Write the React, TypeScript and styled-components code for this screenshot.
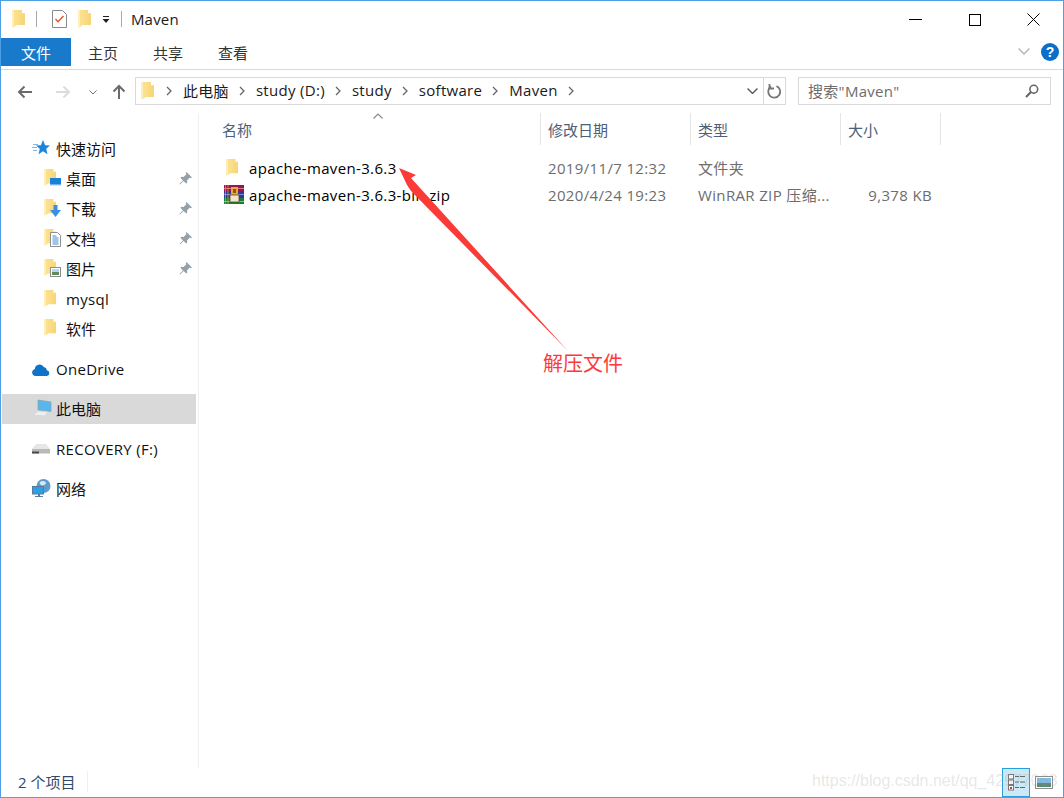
import { FC, ReactNode } from "react";
import styled, { createGlobalStyle } from "styled-components";

const UI_FONT = `"Open Sans", "Noto Sans CJK SC", sans-serif`;

const GlobalStyle = createGlobalStyle`
  html, body {
    margin: 0;
    padding: 0;
    background: #fff;
  }
  * {
    box-sizing: border-box;
  }
`;

const FolderIcon: FC<{ size?: number }> = ({ size = 18 }) => (
  <svg width={size * 0.72} height={size} viewBox="0 0 13 18">
    <defs>
      <linearGradient id="folderBody" x1="0" y1="0" x2="1" y2="0">
        <stop offset="0" stopColor="#fde594" />
        <stop offset="1" stopColor="#f7d377" />
      </linearGradient>
    </defs>
    <path d="M0 0H10V3H13V15H5L1 17.500 0 17z" fill="url(#folderBody)" />
    <path d="M0 0H2V17L1 17.500 0 17z" fill="#fdeebb" />
    <path d="M5 15V3h8v.800H6V15z" fill="#fbe08e" />
  </svg>
);

const NavFolder: FC<{ badge?: ReactNode }> = ({ badge }) => (
  <FolderWrap>
    <FolderIcon size={17} />
    {badge}
  </FolderWrap>
);

const DesktopBadge = () => (
  <BadgeSvg width="11" height="9" viewBox="0 0 11 9">
    <rect width="11" height="8" fill="#1a7fd8" />
    <rect y="6.500" width="11" height="1.500" fill="#cfe4f7" />
  </BadgeSvg>
);

const DownloadBadge = () => (
  <BadgeSvg width="11" height="12" viewBox="0 0 11 12">
    <path d="M3.500 0h4v5H11L5.500 12 0 5h3.500z" fill="#3c8ee0" />
  </BadgeSvg>
);

const DocumentBadge = () => (
  <BadgeSvg width="11" height="15" viewBox="0 0 11 15">
    <path d="M.5.500h7l3 3v11H.5z" fill="#fff" stroke="#8e8e8e" />
    <path d="M2.500 4h4M2.500 6h6M2.500 8h6M2.500 10h6M2.500 12h6" stroke="#3f8bd0" />
  </BadgeSvg>
);

const PictureBadge = () => (
  <BadgeSvg width="11" height="10" viewBox="0 0 11 10">
    <rect x=".5" y=".5" width="10" height="9" fill="#fff" stroke="#8e8e8e" />
    <rect x="2" y="2" width="7" height="3" fill="#b7d7ee" />
    <rect x="2" y="5" width="7" height="3" fill="#5f8a5a" />
  </BadgeSvg>
);

const PinIcon = () => (
  <svg width="13" height="13" viewBox="0 0 13 13">
    <path d="M7.500 0L13 5.500l-1.200.8-1-.7L8 8.400l.3 2.200-1 1L4.600 9 1 12.600.4 12 4 8.400 1.400 5.700l1-1 2.200.3 2.800-2.800-.7-1z" fill="#94a0aa" />
  </svg>
);

const StarIcon = () => (
  <svg width="18" height="16" viewBox="0 0 18 16">
    <path d="M1 4.500h5M0 7.500h5M1 10.500h4" stroke="#7cbdee" strokeWidth="1" />
    <path d="M11 0l2.100 5.200 4.900.3-3.800 3.300 1.300 5.500L11 11.200 6.500 14.300l1.300-5.500L4 5.500l4.900-.3z" fill="#1a84dc" />
  </svg>
);

const CloudIcon = () => (
  <svg width="18" height="13" viewBox="0 0 18 13">
    <path d="M3.500 13A3.500 3.500 0 0 1 2.800 6.100 4.800 4.800 0 0 1 11.800 4.100 3.800 3.800 0 0 1 14.900 7.300 2.900 2.900 0 0 1 15 13z" fill="#0f74c8" />
  </svg>
);

const LaptopIcon = () => (
  <svg width="20" height="18" viewBox="0 0 20 18">
    <path d="M6 1l13 2v9.500L6 11z" fill="#58b6ee" stroke="#8ca3b3" strokeWidth=".8" />
    <path d="M1 16l5-4 10 1-3 4z" fill="#eceef0" stroke="#cfd1d3" strokeWidth=".6" />
  </svg>
);

const DriveIcon = () => (
  <svg width="18" height="10" viewBox="0 0 18 10">
    <path d="M4 0h10l4 5H0z" fill="#e6e6e6" />
    <path d="M0 5h18v4.500H0z" fill="#b9b9b9" />
    <path d="M0 7.500h7v2H0z" fill="#4a4a4a" />
  </svg>
);

const NetworkIcon = () => (
  <svg width="19" height="18" viewBox="0 0 19 18">
    <circle cx="11.500" cy="7" r="7" fill="#5d9ccb" />
    <path d="M8 3c2-2 6-1 6 1s-4 3-5 2-2-2-1-3z" fill="#d5e8f4" />
    <rect x=".5" y="7.500" width="11" height="7.500" fill="#2f9de8" stroke="#567d9c" />
    <path d="M3 17h8v1H3zM6 15h2v2H6z" fill="#5b7f99" />
  </svg>
);

const RarIcon = () => (
  <svg width="20" height="19" viewBox="0 0 20 19">
    <rect y="0" width="20" height="6" fill="#96174a" />
    <rect y="6" width="20" height="7" fill="#34398f" />
    <rect y="13" width="20" height="6" fill="#1b7d35" />
    <rect x="0" y="3" width="20" height="1" fill="#d8798a" />
    <rect x="0" y="9" width="20" height="1" fill="#8585d8" />
    <rect x="0" y="16" width="20" height="1" fill="#74c680" />
    <path d="M1 0h1v19H1zM3.500 0h1v19h-1z" fill="#d9a83c" opacity=".7" />
    <rect x="7" y="2" width="7" height="8" fill="#e6a93a" />
    <rect x="6" y="10" width="9" height="7" fill="#efe7d2" stroke="#5c4a2a" strokeWidth=".8" />
    <rect x="9" y="4" width="3" height="4" fill="#8a5a14" />
  </svg>
);

const CheckDocIcon = () => (
  <svg width="15" height="18" viewBox="0 0 15 18">
    <path d="M.5.500h10l4 4v13H.5z" fill="#fff" stroke="#8a8a8a" />
    <path d="M3.500 9l2.500 2.800L11.500 6" fill="none" stroke="#e8532b" strokeWidth="1.400" />
  </svg>
);

const Caret: FC<{ up?: boolean; color?: string; size?: number }> = ({ up, color = "#555", size = 9 }) => (
  <svg width={size} height={size * 0.6} viewBox="0 0 10 6">
    <path d={up ? "M.5 5.500L5 1l4.500 4.500" : "M.5.5L5 5 9.500.5"} fill="none" stroke={color} strokeWidth="1.200" />
  </svg>
);

const CrumbChevron = () => (
  <CrumbArrow width="6" height="10" viewBox="0 0 6 10">
    <path d="M1 1l4 4-4 4" fill="none" stroke="#666" strokeWidth="1.300" />
  </CrumbArrow>
);

const NavArrow: FC<{ dir: "left" | "right" | "up"; color: string }> = ({ dir, color }) => {
  const paths = {
    left: "M15 7H2M7.500 1.500L2 7l5.500 5.500",
    right: "M1 7h13M8.500 1.500L14 7l-5.500 5.500",
    up: "M7 15V2M1.500 7.500L7 2l5.500 5.500",
  };
  return (
    <svg width={dir === "up" ? 14 : 16} height={dir === "up" ? 16 : 14} viewBox={dir === "up" ? "0 0 14 16" : "0 0 16 14"}>
      <path d={paths[dir]} fill="none" stroke={color} strokeWidth="2" />
    </svg>
  );
};

const quickAccess = [
  { label: "桌面", badge: <DesktopBadge />, pinned: true },
  { label: "下载", badge: <DownloadBadge />, pinned: true },
  { label: "文档", badge: <DocumentBadge />, pinned: true },
  { label: "图片", badge: <PictureBadge />, pinned: true },
  { label: "mysql", pinned: false, latin: true },
  { label: "软件", pinned: false },
];

const crumbs = ["此电脑", "study (D:)", "study", "software", "Maven"];

const files = [
  { name: "apache-maven-3.6.3", icon: <FolderIcon size={17} />, inset: 8, date: "2019/11/7 12:32", type: "文件夹", size: "" },
  { name: "apache-maven-3.6.3-bin.zip", icon: <RarIcon />, inset: 6, date: "2020/4/24 19:23", type: "WinRAR ZIP 压缩...", size: "9,378 KB" },
];

const App: FC = () => {
  return (
    <>
      <GlobalStyle />
      <Window>
        <TitleBar>
          <QuickIcons>
            <FolderIcon />
            <TitleDivider />
            <CheckDocIcon />
            <FolderIcon />
            <svg width="8" height="7" viewBox="0 0 8 7">
              <path d="M1 0h6v1H1zM.5 3h7L4 7z" fill="#222" />
            </svg>
            <TitleDivider />
          </QuickIcons>
          <TitleText>Maven</TitleText>
          <WindowControls>
            <WindowButton>
              <svg width="13" height="1" viewBox="0 0 13 1">
                <rect width="13" height="1" fill="#000" />
              </svg>
            </WindowButton>
            <WindowButton>
              <svg width="12" height="12" viewBox="0 0 12 12">
                <rect x=".5" y=".5" width="11" height="11" fill="none" stroke="#000" />
              </svg>
            </WindowButton>
            <WindowButton>
              <svg width="13" height="13" viewBox="0 0 13 13">
                <path d="M.5.500l12 12M12.500.500l-12 12" stroke="#000" strokeWidth="1" />
              </svg>
            </WindowButton>
          </WindowControls>
        </TitleBar>

        <RibbonTabs>
          <FileTab>文件</FileTab>
          <RibbonTab>主页</RibbonTab>
          <RibbonTab>共享</RibbonTab>
          <RibbonTab>查看</RibbonTab>
          <RibbonRight>
            <Caret color="#b5b5b5" size={12} />
            <HelpBadge>?</HelpBadge>
          </RibbonRight>
        </RibbonTabs>

        <NavBar>
          <NavButtons>
            <NavArrow dir="left" color="#6b6b6b" />
            <NavArrow dir="right" color="#dcdcdc" />
            <Caret color="#6b6b6b" size={8} />
            <NavArrow dir="up" color="#6b6b6b" />
          </NavButtons>
          <AddressBox>
            <AddressFolder>
              <FolderIcon />
            </AddressFolder>
            <CrumbChevron />
            {crumbs.map((crumb) => (
              <Crumb key={crumb}>
                <span>{crumb}</span>
                <CrumbChevron />
              </Crumb>
            ))}
            <AddressEnd>
              <AddressDrop>
                <Caret color="#555" size={11} />
              </AddressDrop>
              <RefreshButton>
                <svg width="15" height="15" viewBox="0 0 15 15">
                  <path d="M9.500 2.100A6 6 0 1 1 4 2.600" fill="none" stroke="#777" strokeWidth="1.800" />
                  <path d="M2.500 0v4.500H7" fill="none" stroke="#777" strokeWidth="1.800" />
                </svg>
              </RefreshButton>
            </AddressEnd>
          </AddressBox>
          <SearchBox>
            <span>搜索"Maven"</span>
            <svg width="14" height="14" viewBox="0 0 14 14">
              <circle cx="8.800" cy="5.200" r="3.900" fill="none" stroke="#666" strokeWidth="1.600" />
              <path d="M6 8L1 13" stroke="#666" strokeWidth="2.200" />
            </svg>
          </SearchBox>
        </NavBar>

        <Body>
          <Sidebar>
            <SideGroup>
              <SideRow>
                <RootIcon>
                  <StarIcon />
                </RootIcon>
                快速访问
              </SideRow>
              {quickAccess.map((item) => (
                <SideRow key={item.label} $nested $latin={item.latin}>
                  <NavFolder badge={item.badge} />
                  {item.label}
                  {item.pinned && (
                    <PinSlot>
                      <PinIcon />
                    </PinSlot>
                  )}
                </SideRow>
              ))}
            </SideGroup>
            <SideGroup>
              <SideRow $latin>
                <RootIcon>
                  <CloudIcon />
                </RootIcon>
                OneDrive
              </SideRow>
            </SideGroup>
            <SideGroup>
              <SideRow $selected>
                <RootIcon>
                  <LaptopIcon />
                </RootIcon>
                此电脑
              </SideRow>
            </SideGroup>
            <SideGroup>
              <SideRow $latin>
                <RootIcon>
                  <DriveIcon />
                </RootIcon>
                RECOVERY (F:)
              </SideRow>
            </SideGroup>
            <SideGroup>
              <SideRow>
                <RootIcon>
                  <NetworkIcon />
                </RootIcon>
                网络
              </SideRow>
            </SideGroup>
          </Sidebar>

          <Content>
            <ColumnHeader>
              <HeaderCell $first>
                名称
                <SortCaret>
                  <Caret up color="#8a8a8a" size={10} />
                </SortCaret>
              </HeaderCell>
              <HeaderCell>修改日期</HeaderCell>
              <HeaderCell>类型</HeaderCell>
              <HeaderCell>大小</HeaderCell>
            </ColumnHeader>
            <FileList>
              {files.map((file) => (
                <FileRow key={file.name}>
                  <NameCell>
                    <FileIcon $inset={file.inset}>{file.icon}</FileIcon>
                    {file.name}
                  </NameCell>
                  <InfoCell>{file.date}</InfoCell>
                  <InfoCell>{file.type}</InfoCell>
                  <SizeCell>{file.size}</SizeCell>
                </FileRow>
              ))}
            </FileList>
          </Content>
        </Body>

        <StatusBar>
          <ItemCount>2 个项目</ItemCount>
          <ViewToggle>
            <DetailsView>
              <svg width="17" height="17" viewBox="0 0 17 17">
                <rect x=".5" y=".5" width="5" height="4.500" fill="#fff" stroke="#777" />
                <rect x=".5" y="6" width="5" height="4.500" fill="#fff" stroke="#777" />
                <rect x=".5" y="11.500" width="5" height="4.500" fill="#fff" stroke="#777" />
                <rect x="2" y="13" width="2" height="2" fill="#d8362a" />
                <path d="M7 2.500h4M12 2.500h5M7 8h4M12 8h5M7 13.500h4M12 13.500h5" stroke="#666" />
              </svg>
            </DetailsView>
            <svg width="18" height="13" viewBox="0 0 18 13">
              <rect x=".5" y=".5" width="17" height="12" fill="#fff" stroke="#8e8e8e" />
              <rect x="2" y="2" width="14" height="5" fill="#7fbde8" />
              <rect x="2" y="7" width="14" height="4" fill="#5b8a74" />
            </svg>
          </ViewToggle>
        </StatusBar>

        <CalloutArrow width="1064" height="798" viewBox="0 0 1064 798">
          <polygon points="399,168 416,175 411,178 568,351 411,191 407,185" fill="#fb3b38" />
        </CalloutArrow>
        <CalloutLabel>解压文件</CalloutLabel>
        <Watermark>https://blog.csdn.net/qq_42977063</Watermark>
      </Window>
    </>
  );
};

const Window = styled.div`
  position: relative;
  width: 1064px;
  height: 798px;
  display: flex;
  flex-direction: column;
  overflow: hidden;
  background: #fff;
  border: 1px solid #4d9fe6;
  font-family: ${UI_FONT};
  font-size: 15px;
  color: #000;
`;

const TitleBar = styled.div`
  height: 37px;
  flex: none;
  display: flex;
  align-items: center;
  padding: 0 0 1px 11px;
`;

const QuickIcons = styled.div`
  display: flex;
  align-items: center;
  gap: 11px;
`;

const TitleDivider = styled.div`
  width: 1px;
  height: 16px;
  margin-right: 4px;
  background: #a8a8a8;
`;

const TitleText = styled.div`
  margin-left: 5px;
  letter-spacing: 0.2px;
  color: #1a1a1a;
`;

const WindowControls = styled.div`
  margin-left: auto;
  margin-bottom: -1px;
  display: flex;
  align-items: center;
`;

const WindowButton = styled.div`
  width: 59px;
  height: 37px;
  display: flex;
  align-items: center;
  justify-content: center;
`;

const RibbonTabs = styled.div`
  height: 32px;
  flex: none;
  display: flex;
  align-items: flex-start;
  border-bottom: 1px solid #dadada;
`;

const FileTab = styled.div`
  width: 70px;
  height: 28px;
  display: flex;
  align-items: center;
  justify-content: center;
  background: #1979ca;
  color: #fff;
`;

const RibbonTab = styled.div`
  width: 65px;
  height: 28px;
  padding-left: 17px;
  display: flex;
  align-items: center;
  color: #333;
`;

const RibbonRight = styled.div`
  margin-left: auto;
  height: 28px;
  padding-right: 4px;
  display: flex;
  align-items: center;
  gap: 11px;
`;

const HelpBadge = styled.div`
  width: 18px;
  height: 18px;
  border-radius: 50%;
  display: flex;
  align-items: center;
  justify-content: center;
  background: #0b6fc9;
  color: #fff;
  font-family: "Liberation Sans", sans-serif;
  font-size: 14px;
  font-weight: 700;
`;

const NavBar = styled.div`
  height: 43px;
  flex: none;
  display: flex;
  align-items: flex-start;
  padding: 7px 12px 0 16px;
`;

const NavButtons = styled.div`
  width: 118px;
  height: 30px;
  display: flex;
  align-items: center;
  gap: 22px;

  & > svg:nth-child(3) {
    margin-left: -4px;
  }
  & > svg:nth-child(4) {
    margin-left: -7px;
  }
`;

const AddressBox = styled.div`
  width: 651px;
  height: 28px;
  display: flex;
  align-items: center;
  padding-left: 5px;
  border: 1px solid #d9d9d9;
  color: #1a1a1a;
  letter-spacing: 0.3px;

  & > ${() => Crumb} > span {
    margin-bottom: 2px;
  }
`;

const AddressFolder = styled.div`
  display: flex;
  width: 15px;
`;

const CrumbArrow = styled.svg`
  flex: none;
  margin: 0 11px 0 10px;
`;

const Crumb = styled.div`
  display: flex;
  align-items: center;
`;

const AddressEnd = styled.div`
  margin-left: auto;
  height: 100%;
  display: flex;
`;

const AddressDrop = styled.div`
  width: 22px;
  display: flex;
  align-items: center;
  justify-content: center;
`;

const RefreshButton = styled.div`
  width: 22px;
  display: flex;
  align-items: center;
  justify-content: center;
  border-left: 1px solid #d9d9d9;
`;

const SearchBox = styled.div`
  width: 253px;
  height: 28px;
  margin-left: 12px;
  padding: 0 11px 1px 9px;
  display: flex;
  align-items: center;
  justify-content: space-between;
  border: 1px solid #d9d9d9;
  color: #6d6d6d;
  letter-spacing: 0.3px;
`;

const Body = styled.div`
  flex: 1;
  min-height: 0;
  display: flex;
`;

const Sidebar = styled.div`
  width: 198px;
  flex: none;
  padding: 21px 2px 0 1px;
  border-right: 1px solid #f0f0f0;
`;

const SideGroup = styled.div`
  margin-bottom: 10px;
`;

const SideRow = styled.div<{ $nested?: boolean; $selected?: boolean; $latin?: boolean }>`
  height: 30px;
  display: flex;
  align-items: center;
  padding-left: ${(p) => (p.$nested ? "42px" : "30px")};
  padding-bottom: ${(p) => (p.$latin ? "0" : "2px")};
  background: ${(p) => (p.$selected ? "#d9d9d9" : "transparent")};
  letter-spacing: ${(p) => (p.$latin ? "0.3px" : "0")};
  color: #111;
`;

const RootIcon = styled.div`
  width: 24px;
  flex: none;
  display: flex;
`;

const FolderWrap = styled.div`
  position: relative;
  width: 22px;
  height: 18px;
  flex: none;
  display: flex;
`;

const BadgeSvg = styled.svg`
  position: absolute;
  right: 5px;
  bottom: 0;
`;

const PinSlot = styled.div`
  margin-left: auto;
  margin-right: 4px;
  display: flex;
`;

const Content = styled.div`
  flex: 1;
  min-width: 0;
  padding-left: 19px;
`;

const ColumnHeader = styled.div`
  height: 33px;
  display: grid;
  grid-template-columns: 323px 150px 150px 100px;
  width: 723px;
  padding-bottom: 1px;
`;

const HeaderCell = styled.div<{ $first?: boolean }>`
  position: relative;
  display: flex;
  align-items: center;
  padding-left: ${(p) => (p.$first ? "4px" : "7px")};
  border-right: 1px solid #e5e5e5;
  color: #4c607a;
`;

const SortCaret = styled.div`
  position: absolute;
  left: 155px;
  top: 0;
  display: flex;
`;

const FileList = styled.div`
  padding-top: 8px;
  letter-spacing: 0.35px;
`;

const FileRow = styled.div`
  height: 27px;
  display: grid;
  grid-template-columns: 323px 150px 150px 100px;
  align-items: center;
  width: 723px;
`;

const NameCell = styled.div`
  display: flex;
  align-items: center;
  color: #000;
`;

const FileIcon = styled.div<{ $inset: number }>`
  width: 31px;
  padding-left: ${(p) => p.$inset}px;
  display: flex;
  justify-content: flex-start;
`;

const InfoCell = styled.div`
  padding-left: 7px;
  color: #6d6d6d;
`;

const SizeCell = styled(InfoCell)`
  padding-right: 9px;
  text-align: right;
`;

const StatusBar = styled.div`
  height: 29px;
  flex: none;
  display: flex;
  align-items: center;
  justify-content: space-between;
  padding-left: 17px;
`;

const ItemCount = styled.div`
  margin-bottom: 2px;
  padding-right: 12px;
  border-right: 1px solid #efefef;
  color: #2f4a6a;
`;

const ViewToggle = styled.div`
  height: 100%;
  display: flex;
  align-items: center;
  gap: 5px;
  padding-right: 10px;
`;

const DetailsView = styled.div`
  width: 28px;
  height: 100%;
  display: flex;
  align-items: center;
  justify-content: center;
  background: #cbe8f6;
  border: 1px solid #26a0da;
`;

const CalloutArrow = styled.svg`
  position: absolute;
  left: -1px;
  top: -1px;
  pointer-events: none;
`;

const CalloutLabel = styled.div`
  position: absolute;
  left: 542px;
  top: 348px;
  font-size: 20px;
  line-height: 30px;
  color: #fb3b38;
`;

const Watermark = styled.div`
  position: absolute;
  left: 811px;
  top: 769px;
  font-family: "Liberation Sans", sans-serif;
  font-size: 16px;
  line-height: 22px;
  color: rgba(150, 150, 150, 0.24);
  white-space: nowrap;
`;

export default App;
